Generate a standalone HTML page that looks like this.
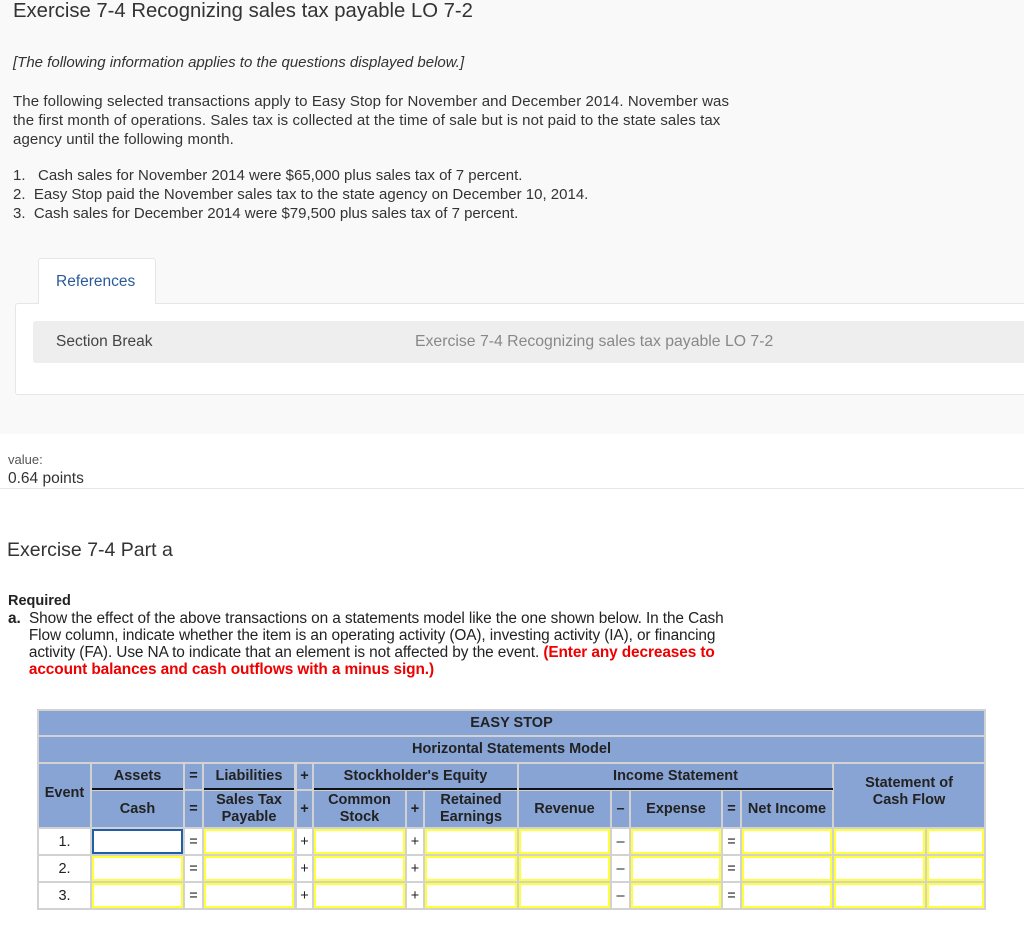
<!DOCTYPE html>
<html><head><meta charset="utf-8"><style>
*{margin:0;padding:0;box-sizing:border-box}
body{width:1024px;height:933px;position:relative;background:#fff;font-family:"Liberation Sans",sans-serif;color:#333;overflow:hidden}
.a{position:absolute;white-space:nowrap}
.c{position:absolute;display:flex;align-items:center;justify-content:center;text-align:center;font-weight:bold;font-size:14.5px;color:#222;line-height:17px;background:#88a4d4}
.w{position:absolute;background:#fff;display:flex;align-items:center;justify-content:center;font-size:14.5px;color:#222}
.y{position:absolute;background:#fff;border:2px solid #ffff3a}
.ln{position:absolute;height:2px;background:#111}
</style></head><body>
<div class="a" style="left:0;top:0;width:1024px;height:434px;background:#f9f9f9"></div>
<div class="a" style="left:13px;top:0px;font-size:20.3px;color:#333">Exercise 7-4 Recognizing sales tax payable LO 7-2</div>
<div class="a" style="left:13px;top:54px;font-size:15px;font-style:italic">[The following information applies to the questions displayed below.]</div>
<div class="a" style="left:13px;top:92px;font-size:15px;line-height:19px;letter-spacing:0.1px">The following selected transactions apply to Easy Stop for November and December 2014. November was<br>the first month of operations. Sales tax is collected at the time of sale but is not paid to the state sales tax<br>agency until the following month.</div>
<div class="a" style="left:13px;top:166px;font-size:15px;line-height:19px">1.&nbsp;&nbsp;&nbsp;Cash sales for November 2014 were $65,000 plus sales tax of 7 percent.<br>2.&nbsp;&nbsp;Easy Stop paid the November sales tax to the state agency on December 10, 2014.<br>3.&nbsp;&nbsp;Cash sales for December 2014 were $79,500 plus sales tax of 7 percent.</div>
<div class="a" style="left:15px;top:303px;width:1015px;height:92px;background:#fff;border:1px solid #e6e6e6;border-radius:3px"></div>
<div class="a" style="left:38px;top:258px;width:118px;height:46px;background:#fff;border:1px solid #e6e6e6;border-bottom:none;border-radius:3px 3px 0 0"></div>
<div class="a" style="left:56px;top:273px;font-size:15.5px;color:#2a5a9a">References</div>
<div class="a" style="left:33px;top:321px;width:1000px;height:42px;background:#eee;border-radius:3px"></div>
<div class="a" style="left:56px;top:333px;font-size:15.5px;color:#444">Section Break</div>
<div class="a" style="left:415px;top:333px;font-size:15.8px;color:#888">Exercise 7-4 Recognizing sales tax payable LO 7-2</div>
<div class="a" style="left:8px;top:452px;font-size:13px;color:#555">value:</div>
<div class="a" style="left:8px;top:470px;font-size:15.5px;color:#333">0.64 points</div>
<div class="a" style="left:0;top:488px;width:1024px;height:1px;background:#e6e6e6"></div>
<div class="a" style="left:7px;top:539px;font-size:19.5px;color:#333">Exercise 7-4 Part a</div>
<div class="a" style="left:8px;top:593px;font-size:14.5px;font-weight:bold;color:#222">Required</div>
<div class="a" style="left:8px;top:610px;font-size:15.4px;line-height:17px;color:#222;letter-spacing:-0.1px"><b>a.</b>&nbsp;&nbsp;Show the effect of the above transactions on a statements model like the one shown below. In the Cash<br>&nbsp;&nbsp;&nbsp;&nbsp;&nbsp;Flow column, indicate whether the item is an operating activity (OA), investing activity (IA), or financing<br>&nbsp;&nbsp;&nbsp;&nbsp;&nbsp;activity (FA). Use NA to indicate that an element is not affected by the event. <b style="color:#e00">(Enter any decreases to</b><br>&nbsp;&nbsp;&nbsp;&nbsp;&nbsp;<b style="color:#e00">account balances and cash outflows with a minus sign.)</b></div>

<div class="a" style="left:37px;top:709px;width:949px;height:201px;background:#d2d2d2"></div>
<div class="c" style="left:39px;top:711px;width:945px;height:24px">EASY STOP</div>
<div class="c" style="left:39px;top:737px;width:945px;height:25px">Horizontal Statements Model</div>
<div class="c" style="left:39px;top:764px;width:51px;height:63px;padding-bottom:4px">Event</div>
<div class="c" style="left:92px;top:764px;width:91px;height:25px">Assets</div>
<div class="c" style="left:185px;top:764px;width:17px;height:25px">=</div>
<div class="c" style="left:204px;top:764px;width:90px;height:25px">Liabilities</div>
<div class="c" style="left:297px;top:764px;width:15px;height:25px">+</div>
<div class="c" style="left:314px;top:764px;width:203px;height:25px">Stockholder's Equity</div>
<div class="c" style="left:519px;top:764px;width:313px;height:25px">Income Statement</div>
<div class="c" style="left:834px;top:764px;width:150px;height:63px;padding-bottom:8px">Statement of<br>Cash Flow</div>
<div class="ln" style="left:92px;top:788px;width:91px"></div>
<div class="ln" style="left:204px;top:788px;width:90px"></div>
<div class="ln" style="left:314px;top:788px;width:203px"></div>
<div class="ln" style="left:519px;top:788px;width:314px"></div>
<div class="c" style="left:92px;top:791px;width:91px;height:36px">Cash</div>
<div class="c" style="left:185px;top:791px;width:17px;height:36px">=</div>
<div class="c" style="left:204px;top:791px;width:90px;height:36px">Sales Tax<br>Payable</div>
<div class="c" style="left:297px;top:791px;width:15px;height:36px">+</div>
<div class="c" style="left:314px;top:791px;width:91px;height:36px">Common<br>Stock</div>
<div class="c" style="left:407px;top:791px;width:16px;height:36px">+</div>
<div class="c" style="left:425px;top:791px;width:92px;height:36px">Retained<br>Earnings</div>
<div class="c" style="left:519px;top:791px;width:91px;height:36px">Revenue</div>
<div class="c" style="left:612px;top:791px;width:17px;height:36px">–</div>
<div class="c" style="left:631px;top:791px;width:90px;height:36px">Expense</div>
<div class="c" style="left:723px;top:791px;width:17px;height:36px">=</div>
<div class="c" style="left:742px;top:791px;width:90px;height:36px">Net Income</div>

<div class="w" style="left:39px;top:829px;width:51px;height:25px">1.</div>
<div class="w" style="left:39px;top:856px;width:51px;height:25px">2.</div>
<div class="w" style="left:39px;top:883px;width:51px;height:25px">3.</div>
<div class="w" style="left:185px;top:829px;width:17px;height:25px">=</div>
<div class="w" style="left:185px;top:856px;width:17px;height:25px">=</div>
<div class="w" style="left:185px;top:883px;width:17px;height:25px">=</div>
<div class="w" style="left:297px;top:829px;width:15px;height:25px">+</div>
<div class="w" style="left:297px;top:856px;width:15px;height:25px">+</div>
<div class="w" style="left:297px;top:883px;width:15px;height:25px">+</div>
<div class="w" style="left:407px;top:829px;width:16px;height:25px">+</div>
<div class="w" style="left:407px;top:856px;width:16px;height:25px">+</div>
<div class="w" style="left:407px;top:883px;width:16px;height:25px">+</div>
<div class="w" style="left:612px;top:829px;width:17px;height:25px">–</div>
<div class="w" style="left:612px;top:856px;width:17px;height:25px">–</div>
<div class="w" style="left:612px;top:883px;width:17px;height:25px">–</div>
<div class="w" style="left:723px;top:829px;width:17px;height:25px">=</div>
<div class="w" style="left:723px;top:856px;width:17px;height:25px">=</div>
<div class="w" style="left:723px;top:883px;width:17px;height:25px">=</div>

<div class="y" style="left:92px;top:829px;width:91px;height:25px;border-color:#1f5fa6"></div>
<div class="y" style="left:92px;top:856px;width:91px;height:25px"></div>
<div class="y" style="left:92px;top:883px;width:91px;height:25px"></div>
<div class="y" style="left:204px;top:829px;width:90px;height:25px"></div>
<div class="y" style="left:204px;top:856px;width:90px;height:25px"></div>
<div class="y" style="left:204px;top:883px;width:90px;height:25px"></div>
<div class="y" style="left:314px;top:829px;width:91px;height:25px"></div>
<div class="y" style="left:314px;top:856px;width:91px;height:25px"></div>
<div class="y" style="left:314px;top:883px;width:91px;height:25px"></div>
<div class="y" style="left:425px;top:829px;width:92px;height:25px"></div>
<div class="y" style="left:425px;top:856px;width:92px;height:25px"></div>
<div class="y" style="left:425px;top:883px;width:92px;height:25px"></div>
<div class="y" style="left:519px;top:829px;width:91px;height:25px"></div>
<div class="y" style="left:519px;top:856px;width:91px;height:25px"></div>
<div class="y" style="left:519px;top:883px;width:91px;height:25px"></div>
<div class="y" style="left:631px;top:829px;width:90px;height:25px"></div>
<div class="y" style="left:631px;top:856px;width:90px;height:25px"></div>
<div class="y" style="left:631px;top:883px;width:90px;height:25px"></div>
<div class="y" style="left:742px;top:829px;width:90px;height:25px"></div>
<div class="y" style="left:742px;top:856px;width:90px;height:25px"></div>
<div class="y" style="left:742px;top:883px;width:90px;height:25px"></div>
<div class="y" style="left:834px;top:829px;width:91px;height:25px"></div>
<div class="y" style="left:834px;top:856px;width:91px;height:25px"></div>
<div class="y" style="left:834px;top:883px;width:91px;height:25px"></div>
<div class="y" style="left:927px;top:829px;width:57px;height:25px"></div>
<div class="y" style="left:927px;top:856px;width:57px;height:25px"></div>
<div class="y" style="left:927px;top:883px;width:57px;height:25px"></div>
</body></html>
